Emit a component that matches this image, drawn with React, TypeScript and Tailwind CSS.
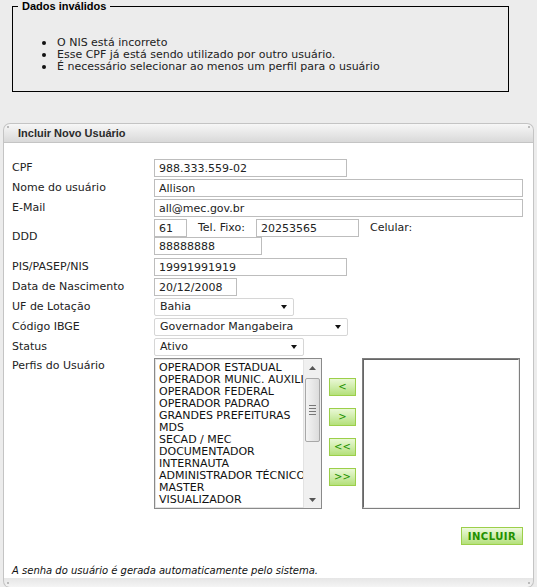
import React from 'react';

const perfis = [
  'OPERADOR ESTADUAL',
  'OPERADOR MUNIC. AUXILIAR',
  'OPERADOR FEDERAL',
  'OPERADOR PADRAO',
  'GRANDES PREFEITURAS',
  'MDS',
  'SECAD / MEC',
  'DOCUMENTADOR',
  'INTERNAUTA',
  'ADMINISTRADOR TÉCNICO',
  'MASTER',
  'VISUALIZADOR',
];

function Field({ value, width }: { value: string; width: string }) {
  return (
    <input
      readOnly
      value={value}
      className={`h-[18px] ${width} border border-[#bdbdbd] bg-white pl-[4px] text-[11px] leading-[16px] text-[#222] outline-none`}
    />
  );
}

function Select({ value, width }: { value: string; width: string }) {
  return (
    <div
      className={`flex h-[18px] ${width} items-center justify-between rounded-[2px] border border-[#d6d6d6] bg-white pl-[5px] pr-[6px]`}
    >
      <span>{value}</span>
      <svg width="6" height="4" viewBox="0 0 6 4">
        <path d="M0 0h6L3 4z" fill="#111" />
      </svg>
    </div>
  );
}

function Row({ label, children, top }: { label: string; children: React.ReactNode; top?: boolean }) {
  return (
    <div className={`flex ${top ? 'items-start' : 'items-center'}`}>
      <div className="w-[142px] shrink-0">{label}</div>
      <div>{children}</div>
    </div>
  );
}

function MoveButton({ label }: { label: string }) {
  return (
    <button className="flex h-[18px] w-[27px] items-center justify-center border border-[#9ccf4a] bg-gradient-to-b from-[#eaf8d6] to-[#b4e07a] text-[10px] leading-none text-[#239000]">
      {label}
    </button>
  );
}

export default function App() {
  return (
    <div className="min-h-[587px] bg-[#ececec] font-['DejaVu_Sans',sans-serif] text-[11px] text-[#222]">
      <div className="h-[1px]" />
      {/* mensagens de erro */}
      <fieldset className="ml-[12px] mt-[-1px] h-[92px] w-[497px] border border-black px-[5px]">
        <legend className="px-[4px] font-['Liberation_Sans',sans-serif] text-[11px] font-bold leading-[12px] text-black">
          Dados inválidos
        </legend>
        <ul className="mt-[25px] flex flex-col leading-[12px]">
          {[
            'O NIS está incorreto',
            'Esse CPF já está sendo utilizado por outro usuário.',
            'É necessário selecionar ao menos um perfil para o usuário',
          ].map((msg) => (
            <li key={msg} className="flex items-center">
              <span className="ml-[24px] mr-[11px] h-[4px] w-[4px] rounded-full bg-[#111]" />
              <span>{msg}</span>
            </li>
          ))}
        </ul>
      </fieldset>

      {/* painel */}
      <div className="ml-[3px] mt-[31px] w-[531px]">
        <div className="relative flex h-[19px] items-center rounded-t-[7px] border border-b-0 border-[#c4c4c4] bg-gradient-to-b from-[#f7f7f7] to-[#d9d9d9] pl-[14px] font-['Liberation_Sans',sans-serif] text-[11px] font-bold text-[#2b2b2b]">
          <span className="absolute left-[3px] top-[2px] h-[2px] w-[2px] bg-[#bbb]" />
          <span className="absolute right-[3px] top-[2px] h-[2px] w-[2px] bg-[#bbb]" />
          Incluir Novo Usuário
        </div>
        <div className="flex flex-col border-x border-t border-[#c4c4c4] bg-white pl-[8px] pr-[9px] pt-[16px]">
          <div className="flex flex-col gap-[2px]">
            <Row label="CPF">
              <Field value="988.333.559-02" width="w-[193px]" />
            </Row>
            <Row label="Nome do usuário">
              <Field value="Allison" width="w-[369px]" />
            </Row>
            <Row label="E-Mail">
              <Field value="all@mec.gov.br" width="w-[369px]" />
            </Row>
            <div className="mb-[1px]">
              <Row label="DDD">
                <div className="flex flex-col">
                  <div className="flex items-center">
                    <Field value="61" width="w-[33px]" />
                    <span className="ml-[11px] w-[58px]">Tel. Fixo:</span>
                    <Field value="20253565" width="w-[103px]" />
                    <span className="ml-[11px]">Celular:</span>
                  </div>
                  <Field value="88888888" width="w-[108px]" />
                </div>
              </Row>
            </div>
            <Row label="PIS/PASEP/NIS">
              <Field value="19991991919" width="w-[193px]" />
            </Row>
            <Row label="Data de Nascimento">
              <Field value="20/12/2008" width="w-[83px]" />
            </Row>
            <Row label="UF de Lotação">
              <Select value="Bahia" width="w-[140px]" />
            </Row>
            <Row label="Código IBGE">
              <Select value="Governador Mangabeira" width="w-[194px]" />
            </Row>
            <Row label="Status">
              <Select value="Ativo" width="w-[150px]" />
            </Row>
            <Row label="Perfis do Usuário" top>
              <div className="flex items-start">
                {/* lista de perfis disponíveis */}
                <div className="flex h-[151px] w-[168px] border border-[#8a8a8a] bg-white">
                  <div className="flex flex-1 flex-col overflow-hidden whitespace-nowrap border border-[#e2e2e2] pl-[3px] pt-[2px] leading-[12px] text-[#111]">
                    {perfis.map((p) => (
                      <div key={p}>{p}</div>
                    ))}
                  </div>
                  <div className="flex w-[17px] shrink-0 flex-col bg-[#f0f0f0]">
                    <div className="flex h-[17px] items-center justify-center">
                      <svg width="7" height="4" viewBox="0 0 7 4">
                        <path d="M0 4L3.5 0L7 4z" fill="#555" />
                      </svg>
                    </div>
                    <div className="mx-[1px] mt-[2px] flex h-[64px] flex-col items-center justify-center gap-[2px] rounded-[2px] border border-[#a8a8a8] bg-gradient-to-r from-[#f4f4f4] to-[#dcdcdc]">
                      <span className="h-[1px] w-[7px] bg-[#777]" />
                      <span className="h-[1px] w-[7px] bg-[#777]" />
                      <span className="h-[1px] w-[7px] bg-[#777]" />
                      <span className="h-[1px] w-[7px] bg-[#777]" />
                    </div>
                    <div className="flex-1" />
                    <div className="flex h-[17px] items-center justify-center">
                      <svg width="7" height="4" viewBox="0 0 7 4">
                        <path d="M0 0L3.5 4L7 0z" fill="#555" />
                      </svg>
                    </div>
                  </div>
                </div>
                <div className="ml-[7px] mt-[20px] flex flex-col gap-[12px]">
                  <MoveButton label="<" />
                  <MoveButton label=">" />
                  <MoveButton label="<<" />
                  <MoveButton label=">>" />
                </div>
                {/* perfis selecionados */}
                <div className="ml-[6px] h-[151px] w-[158px] border border-[#7f7f7f] bg-white">
                  <div className="h-full w-full border border-[#666] border-b-[#eee] border-r-[#eee]" />
                </div>
              </div>
            </Row>
          </div>
          <div className="mt-[18px] flex justify-end pr-[1px]">
            <button className="flex h-[18px] w-[62px] items-center justify-center border border-[#9ccf4a] bg-gradient-to-b from-[#eef9dd] to-[#b4e07a] text-[10px] font-bold tracking-[0.5px] text-[#239000]">
              INCLUIR
            </button>
          </div>
          <p className="mt-[20px] mb-[1px] text-[10px] italic leading-[12px] text-[#111]">
            A senha do usuário é gerada automaticamente pelo sistema.
          </p>
        </div>
        <div className="relative h-[10px] rounded-b-[7px] border border-t-0 border-[#c4c4c4] bg-gradient-to-b from-[#e6e6e6] to-[#f4f4f4]">
          <span className="absolute left-[3px] top-[4px] h-[2px] w-[2px] bg-[#bbb]" />
          <span className="absolute right-[3px] top-[4px] h-[2px] w-[2px] bg-[#bbb]" />
        </div>
      </div>
    </div>
  );
}
